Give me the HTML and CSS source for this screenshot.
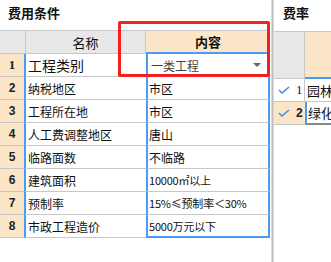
FILE: index.html
```html
<!DOCTYPE html>
<html lang="zh">
<head>
<meta charset="utf-8">
<title>费用条件</title>
<link rel="stylesheet" href="styles.css">
</head>
<body>
<div class="app">
  <section class="left">
    <div class="title">费用条件</div>
    <div class="grid">
      <div class="row head">
        <div class="cell c-num"></div>
        <div class="cell c-name">名称</div>
        <div class="cell c-val">内容</div>
      </div>
      <div class="row">
        <div class="cell c-num serif">1</div>
        <div class="cell c-name big">工程类别</div>
        <div class="cell c-val combo"><span>一类工程</span><span class="arrow"></span></div>
      </div>
      <div class="row">
        <div class="cell c-num">2</div>
        <div class="cell c-name">纳税地区</div>
        <div class="cell c-val">市区</div>
      </div>
      <div class="row">
        <div class="cell c-num">3</div>
        <div class="cell c-name">工程所在地</div>
        <div class="cell c-val">市区</div>
      </div>
      <div class="row">
        <div class="cell c-num">4</div>
        <div class="cell c-name">人工费调整地区</div>
        <div class="cell c-val">唐山</div>
      </div>
      <div class="row">
        <div class="cell c-num">5</div>
        <div class="cell c-name">临路面数</div>
        <div class="cell c-val">不临路</div>
      </div>
      <div class="row">
        <div class="cell c-num">6</div>
        <div class="cell c-name">建筑面积</div>
        <div class="cell c-val small">10000㎡以上</div>
      </div>
      <div class="row">
        <div class="cell c-num">7</div>
        <div class="cell c-name">预制率</div>
        <div class="cell c-val small">15%≤预制率＜30%</div>
      </div>
      <div class="row last">
        <div class="cell c-num">8</div>
        <div class="cell c-name">市政工程造价</div>
        <div class="cell c-val small">5000万元以下</div>
      </div>
    </div>
    <div class="redbox"></div>
  </section>
  <div class="splitter"></div>
  <section class="right">
    <div class="rtitle">费率</div>
    <div class="rrow rhead">
      <div class="rcell r-num"></div>
      <div class="rcell r-val"></div>
    </div>
    <div class="rrow">
      <div class="rcell r-num"><svg class="check" viewBox="0 0 12 8" width="12" height="8"><path d="M1 4 L4 7 L11 1" fill="none" stroke="#3d8fe8" stroke-width="1.6"/></svg><span class="n serif">1</span></div>
      <div class="rcell r-val">园林</div>
    </div>
    <div class="rrow sel">
      <div class="rcell r-num"><svg class="check" viewBox="0 0 12 8" width="12" height="8"><path d="M1 4 L4 7 L11 1" fill="none" stroke="#3d8fe8" stroke-width="1.6"/></svg><span class="n bold">2</span></div>
      <div class="rcell r-val">绿化</div>
    </div>
  </section>
</div>
</body>
</html>
```

FILE: styles.css
```css
* { box-sizing: border-box; }
html, body { margin: 0; padding: 0; background: #fff; }
body {
  width: 331px;
  height: 262px;
  overflow: hidden;
  font-family: "Noto Sans CJK SC", "Noto Sans", sans-serif;
  font-size: 12px;
  color: #111;
}
.app { display: flex; height: 262px; }

/* left panel */
.left { position: relative; width: 271px; flex: none; }
.title {
  height: 30px;
  padding-left: 8px;
  font-size: 13px;
  font-weight: bold;
  line-height: 25px;
  color: #111;
}
.row { display: flex; }
.cell {
  height: 23px;
  display: flex;
  align-items: center;
  border-bottom: 1px solid #c8c8c8;
  white-space: nowrap;
  overflow: hidden;
}
.c-num {
  width: 24px;
  justify-content: center;
  background: #fde6c8;
  font-family: "Liberation Sans", sans-serif;
  font-weight: bold;
  font-size: 12px;
  color: #222;
}
.c-num.serif { font-family: "Liberation Serif", serif; font-size: 13px; }
.c-name {
  width: 122px;
  border-left: 2px solid #4a9bf5;
  padding-left: 2px;
}
.c-name.big { font-size: 14px; }
.c-val {
  width: 124px;
  border-left: 2px solid #4a9bf5;
  border-right: 2px solid #4a9bf5;
  padding-left: 1px;
}
.c-val.small { font-size: 11px; letter-spacing: -0.2px; }
.combo { justify-content: space-between; color: #444; padding-left: 3px; padding-right: 7px; }
.arrow {
  width: 0; height: 0;
  border-left: 4px solid transparent;
  border-right: 4px solid transparent;
  border-top: 4px solid #666;
}
.last .c-val { border-bottom: 2px solid #4a9bf5; }

.head .cell {
  height: 24px;
  border-top: 1px solid #c8c8c8;
  background: #e8e8e8;
  font-size: 13px;
  justify-content: center;
}
.head .c-num { width: 26px; border-right: 1px solid #c8c8c8; }
.head .c-name { width: 120px; border-left: 0; border-right: 1px solid #c8c8c8; padding-left: 0; }
.head .c-val {
  width: 123px;
  border-left: 0;
  border-right: 0;
  background: #fde6c8;
  font-weight: bold;
  border-bottom: 2px solid #4a9bf5;
}

.redbox {
  position: absolute;
  left: 118px;
  top: 21px;
  width: 152px;
  height: 56px;
  border: 3px solid #f2201e;
  border-radius: 2px;
  pointer-events: none;
}

/* splitter */
.splitter {
  width: 3px;
  flex: none;
  background: linear-gradient(to right, #dadada 0, #dadada 1px, #bdbdbd 1px, #bdbdbd 2px, #dadada 2px);
}

/* right panel */
.right { flex: 1; overflow: hidden; }
.rtitle {
  height: 31px;
  padding-left: 9px;
  font-size: 13px;
  font-weight: bold;
  line-height: 26px;
  color: #111;
}
.rrow { display: flex; }
.rcell {
  height: 23px;
  display: flex;
  align-items: center;
  border-bottom: 1px solid #c8c8c8;
  white-space: nowrap;
  overflow: hidden;
}
.r-num {
  width: 31px;
  flex: none;
  border-right: 1px solid #c8c8c8;
  padding-left: 4px;
  gap: 6px;
}
.r-val { flex: 1; padding-left: 2px; font-size: 13px; }
.rhead .rcell { height: 48px; border-top: 1px solid #c8c8c8; }
.rhead .r-num { background: #e8e8e8; }
.rhead .r-val { background: #fde6c8; border-bottom: 2px solid #4a9bf5; }
.n { font-size: 13px; color: #222; }
.n.serif { font-family: "Liberation Serif", serif; }
.n.bold { font-family: "Liberation Sans", sans-serif; font-weight: bold; font-size: 12px; }
.check { flex: none; }
.sel .r-num { background: #fde6c8; border-right: 0; }
.sel .r-val { border-left: 2px solid #4a9bf5; border-bottom: 2px solid #888; padding-left: 1px; }
```
